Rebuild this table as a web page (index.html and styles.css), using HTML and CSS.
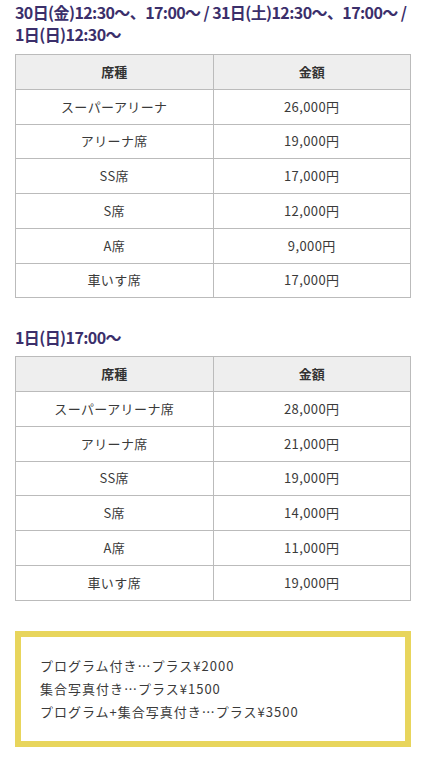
FILE: index.html
```html
<!DOCTYPE html>
<html lang="ja">
<head>
<meta charset="utf-8">
<link rel="stylesheet" href="styles.css">
</head>
<body>
<div class="page">
  <h3 class="heading"><span class="line">30日(金)12:30〜、17:00〜 / 31日(土)12:30〜、17:00〜 /</span><br>1日(日)12:30〜</h3>
  <table class="price">
    <thead><tr><th>席種</th><th>金額</th></tr></thead>
    <tbody>
      <tr><td>スーパーアリーナ</td><td>26,000円</td></tr>
      <tr><td>アリーナ席</td><td>19,000円</td></tr>
      <tr><td>SS席</td><td>17,000円</td></tr>
      <tr><td>S席</td><td>12,000円</td></tr>
      <tr><td>A席</td><td>9,000円</td></tr>
      <tr><td>車いす席</td><td>17,000円</td></tr>
    </tbody>
  </table>
  <h3 class="heading second">1日(日)17:00〜</h3>
  <table class="price">
    <thead><tr><th>席種</th><th>金額</th></tr></thead>
    <tbody>
      <tr><td>スーパーアリーナ席</td><td>28,000円</td></tr>
      <tr><td>アリーナ席</td><td>21,000円</td></tr>
      <tr><td>SS席</td><td>19,000円</td></tr>
      <tr><td>S席</td><td>14,000円</td></tr>
      <tr><td>A席</td><td>11,000円</td></tr>
      <tr><td>車いす席</td><td>19,000円</td></tr>
    </tbody>
  </table>
  <div class="note">
    <p>プログラム付き…プラス¥2000</p>
    <p>集合写真付き…プラス¥1500</p>
    <p>プログラム+集合写真付き…プラス¥3500</p>
  </div>
</div>
</body>
</html>
```

FILE: styles.css
```css
html, body {
  margin: 0;
  padding: 0;
  background: #ffffff;
}
body {
  font-family: "Noto Sans CJK JP", "Noto Sans", sans-serif;
  color: #333333;
}
.page {
  padding: 0 20px 0 15px;
}
.heading {
  margin: 0;
  padding-top: 1px;
  font-size: 16px;
  line-height: 22px;
  font-weight: bold;
  color: #3b2f6b;
  letter-spacing: -0.6px;
  white-space: nowrap;
}
.heading.second {
  margin-top: 27px;
}
.price {
  width: 396px;
  border-collapse: collapse;
  margin-top: 9px;
  table-layout: fixed;
}
.heading.second + .price {
  margin-top: 8px;
}
.price th,
.price td {
  border: 1px solid #bbbbbb;
  height: 33.75px;
  padding: 0;
  text-align: center;
  font-size: 13px;
  line-height: 18px;
  color: #3a3a3a;
  font-weight: normal;
  letter-spacing: 0.4px;
}
.price th {
  background: #eeeeee;
  font-weight: bold;
  color: #333333;
  letter-spacing: 0;
}
.note {
  width: 396px;
  box-sizing: border-box;
  margin-top: 30px;
  border: 6px solid #e8d55c;
  padding: 17px 19px 18px 19px;
}
.note p {
  margin: 0;
  font-size: 13px;
  line-height: 23px;
  color: #3a3a3a;
  letter-spacing: 1px;
}
```
